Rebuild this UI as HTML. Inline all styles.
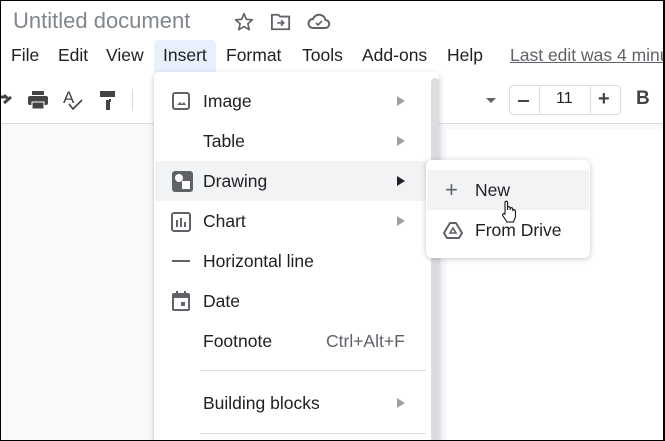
<!DOCTYPE html>
<html><head><meta charset="utf-8"><style>
*{margin:0;padding:0;box-sizing:border-box}
html,body{width:665px;height:441px;overflow:hidden}
body{background:#fff;font-family:"Liberation Sans",Roboto,sans-serif;position:relative;color:#202124}
.frame{position:absolute;left:0;top:0;width:665px;height:441px;border:1px solid #000;border-right-width:2px;z-index:50;pointer-events:none}
.abs{position:absolute}
.title{left:13px;top:8px;font-size:22px;color:#80868b}
.menu{top:45px;font-size:17.5px;color:#202124}
.gray{left:0;top:124px;width:665px;height:317px;background:#f8f9fa}
.page{left:447px;top:129px;width:218px;height:312px;background:#fff}
.ins{left:154px;top:40px;width:62px;height:34px;background:#e8f0fe;border-radius:4px 4px 0 0}
.dd{left:154px;top:72px;width:285px;height:369px;background:#fff;box-shadow:0 2px 6px rgba(60,64,67,.3);border-radius:4px 4px 0 0;overflow:hidden}
.item{position:absolute;left:0;width:273px;height:40px;font-size:17.5px;line-height:40px}
.item .t{position:absolute;left:49px}
.arr{position:absolute;left:243px;top:15px;width:0;height:0;border-left:8px solid #9aa0a6;border-top:5px solid transparent;border-bottom:5px solid transparent}
.sep{position:absolute;left:46px;width:226px;height:1px;background:#dadce0}
.sub{left:426px;top:160px;width:164px;height:98px;background:#fff;border-radius:6px;box-shadow:0 1px 6px rgba(60,64,67,.3)}
</style></head><body>
<div class="frame"></div>
<div class="abs gray"></div>
<div class="abs page"></div>
<div class="abs title">Untitled document</div>
<svg class="abs" style="left:233px;top:11px" width="22" height="22" viewBox="0 0 24 24"><path d="M12 3l2.6 6.1 6.6.5-5 4.3 1.5 6.5L12 17l-5.7 3.4 1.5-6.5-5-4.3 6.6-.5z" fill="none" stroke="#5f6368" stroke-width="1.8" stroke-linejoin="round"/></svg>
<svg class="abs" style="left:270px;top:12px" width="22" height="20" viewBox="0 0 24 22"><path d="M2 3h7l2 2h10v14H2z" fill="none" stroke="#5f6368" stroke-width="2"/><path d="M8 12h7M12 9l3 3-3 3" fill="none" stroke="#5f6368" stroke-width="1.8"/></svg>
<svg class="abs" style="left:307px;top:12px" width="24" height="20" viewBox="0 0 24 20"><path d="M6 16h12a4 4 0 0 0 .5-8A6.5 6.5 0 0 0 6 7a4.5 4.5 0 0 0 0 9z" fill="none" stroke="#5f6368" stroke-width="2"/><path d="M9 11l2 2 4-4" fill="none" stroke="#5f6368" stroke-width="1.6"/></svg>
<div class="abs ins"></div>
<div class="abs menu" style="left:11px">File</div>
<div class="abs menu" style="left:58px">Edit</div>
<div class="abs menu" style="left:106px">View</div>
<div class="abs menu" style="left:163px">Insert</div>
<div class="abs menu" style="left:226px">Format</div>
<div class="abs menu" style="left:302px">Tools</div>
<div class="abs menu" style="left:362px">Add-ons</div>
<div class="abs menu" style="left:447px">Help</div>
<div class="abs menu" style="left:510px;width:154px;overflow:hidden;color:#5f6368;text-decoration:underline;white-space:nowrap">Last edit was 4 minutes ago</div>
<div class="abs" style="left:0;top:78px;width:665px;height:46px;border-bottom:1px solid #dadce0;background:#fff"></div>
<svg class="abs" style="left:0;top:92px" width="14" height="14" viewBox="0 0 14 14"><path d="M0 5h6l-2-2M4 11l7-6" stroke="#444" stroke-width="3" fill="none"/></svg>
<svg class="abs" style="left:27px;top:90px" width="22" height="20" viewBox="0 0 22 20"><rect x="5" y="1" width="12" height="4" fill="#444"/><rect x="1" y="6" width="20" height="9" rx="2" fill="#444"/><rect x="5" y="12" width="12" height="7" fill="#444" stroke="#fff" stroke-width="1"/></svg>
<div class="abs" style="left:63px;top:88px;font-size:17px;color:#444">A</div>
<svg class="abs" style="left:68px;top:99px" width="16" height="12"><path d="M1 5l4 5 9-9" stroke="#444" stroke-width="1.6" fill="none"/></svg>
<svg class="abs" style="left:99px;top:90px" width="18" height="22"><path d="M1 1h15v6H1z" fill="#444"/><rect x="7" y="10" width="4" height="10" fill="#444"/><rect x="10" y="9" width="2" height="3" fill="#444"/></svg>
<div class="abs" style="left:132px;top:89px;width:1px;height:22px;background:#dadce0"></div>
<div class="abs" style="left:486px;top:98px;border-top:5px solid #5f6368;border-left:5px solid transparent;border-right:5px solid transparent"></div>
<div class="abs" style="left:509px;top:85px;width:112px;height:30px;border:1px solid #dadce0;border-radius:4px"></div>
<div class="abs" style="left:539px;top:85px;width:1px;height:30px;background:#dadce0"></div>
<div class="abs" style="left:590px;top:85px;width:1px;height:30px;background:#dadce0"></div>
<div class="abs" style="left:518px;top:100px;width:11px;height:2px;background:#444"></div>
<div class="abs" style="left:556px;top:90px;font-size:16px;color:#202124">11</div>
<div class="abs" style="left:598px;top:88px;font-size:20px;font-weight:bold;color:#444">+</div>
<div class="abs" style="left:636px;top:88px;font-size:19px;font-weight:bold;color:#444">B</div>

<div class="abs dd">
 <div class="abs" style="left:277px;top:6px;width:9px;height:380px;background:#dadce0;border-radius:5px"></div>
 <div class="item" style="top:9px"><svg class="abs" style="left:18px;top:11px" width="18" height="18"><rect x="1" y="1" width="16" height="16" rx="2" fill="none" stroke="#5f6368" stroke-width="2"/><path d="M5 13l3-3 2 2 2-2 2 3z" fill="#5f6368"/></svg><span class="t">Image</span><div class="arr"></div></div>
 <div class="item" style="top:49px"><span class="t">Table</span><div class="arr"></div></div>
 <div class="item" style="top:89px;background:#f1f3f4;left:1px;width:272px"><svg class="abs" style="left:17px;top:10px" width="21" height="21"><rect width="21" height="21" rx="3" fill="#5f6368"/><circle cx="7" cy="7" r="4" fill="#fff"/><rect x="10" y="10" width="8" height="8" fill="#fff"/></svg><span class="t" style="left:48px">Drawing</span><div class="arr" style="border-left-color:#202124;left:242px"></div></div>
 <div class="item" style="top:129px"><svg class="abs" style="left:17px;top:11px" width="20" height="20"><rect x="1" y="1" width="18" height="18" rx="2" fill="none" stroke="#5f6368" stroke-width="2"/><path d="M6 8v7M10 6v9M14 10v5" stroke="#5f6368" stroke-width="2"/></svg><span class="t">Chart</span><div class="arr"></div></div>
 <div class="item" style="top:169px"><div class="abs" style="left:18px;top:19px;width:18px;height:2px;background:#5f6368"></div><span class="t">Horizontal line</span></div>
 <div class="item" style="top:209px"><svg class="abs" style="left:18px;top:10px" width="18" height="20"><rect x="1" y="3" width="16" height="16" rx="1" fill="none" stroke="#5f6368" stroke-width="2"/><rect x="1" y="3" width="16" height="4" fill="#5f6368"/><rect x="4" y="0" width="2" height="4" fill="#5f6368"/><rect x="12" y="0" width="2" height="4" fill="#5f6368"/><rect x="9" y="11" width="4" height="4" fill="#5f6368"/></svg><span class="t">Date</span></div>
 <div class="item" style="top:249px"><span class="t">Footnote</span><span class="abs" style="left:172px;color:#5f6368">Ctrl+Alt+F</span></div>
 <div class="sep" style="top:298px"></div>
 <div class="item" style="top:311px"><span class="t">Building blocks</span><div class="arr"></div></div>
 <div class="sep" style="top:361px"></div>
</div>

<div class="abs sub">
 <div class="abs" style="left:1px;top:10px;width:162px;height:40px;background:#f1f3f4"></div>
 <div class="abs" style="left:19px;top:19px;font-size:22px;color:#5f6368;line-height:22px">+</div>
 <div class="abs" style="left:49px;top:20px;font-size:17.5px">New</div>
 <svg class="abs" style="left:17px;top:62px" width="20" height="17" viewBox="0 0 20 17"><path d="M7 1h6l6 10-3 5H4l-3-5z" fill="none" stroke="#5f6368" stroke-width="2" stroke-linejoin="round"/><path d="M10 6l3 5H7z" fill="none" stroke="#5f6368" stroke-width="1.6"/></svg>
 <div class="abs" style="left:49px;top:60px;font-size:17.5px">From Drive</div>
</div>
<svg class="abs" style="left:501px;top:200px" width="17" height="24" viewBox="0 0 17 24"><path d="M4 12V2.5a1.3 1.3 0 0 1 2.6 0V10V8a1.3 1.3 0 0 1 2.6 0v2V9a1.3 1.3 0 0 1 2.6 0v2a1.3 1.3 0 0 1 2.6 0v6l-2 5H6l-4-6a1.3 1.3 0 0 1 2-2z" fill="#fff" stroke="#000" stroke-width="1"/></svg>
</body></html>
